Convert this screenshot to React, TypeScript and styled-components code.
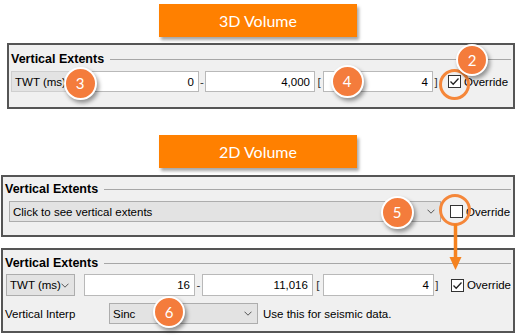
import React from 'react';
import styled, { createGlobalStyle } from 'styled-components';

const colors = {
  banner: '#ff8000',
  callout: '#f47c3c',
  ring: '#f5873a',
  arrow: '#f5821f',
  panelBg: '#f0f0f0',
  panelBorder: '#555555',
  field: '#ffffff',
  fieldBorder: '#b9b9b9',
  combo: '#e3e3e3',
  comboBorder: '#adadad',
  rule: '#a7a7a7',
};

const GlobalStyle = createGlobalStyle`
  body {
    margin: 0;
    background: #ffffff;
    font-family: "Liberation Sans", Arial, sans-serif;
    font-size: 11.5px;
    color: #000;
  }
`;

const Page = styled.div`
  width: 517px;
  height: 335px;
  position: relative;
  overflow: hidden;
  display: flex;
  flex-direction: column;
`;

const Banner = styled.div<{ $top: number }>`
  margin-top: ${(p) => p.$top}px;
  margin-left: 159px;
  width: 198px;
  height: 33px;
  background: ${colors.banner};
  color: #fff;
  font-family: Lato, "Open Sans", sans-serif;
  font-size: 16px;
  display: flex;
  align-items: center;
  justify-content: center;
  box-shadow: 2px 3px 3px rgba(0, 0, 0, 0.35);
`;

const Panel = styled.div<{ $top: number; $left: number; $height: number; $padTop: number }>`
  box-sizing: border-box;
  margin-top: ${(p) => p.$top}px;
  margin-left: ${(p) => p.$left}px;
  width: ${(p) => 515 - p.$left}px;
  height: ${(p) => p.$height}px;
  border: 2px solid ${colors.panelBorder};
  background: ${colors.panelBg};
  padding: ${(p) => p.$padTop}px 2px 0 2px;
  display: flex;
  flex-direction: column;
`;

const TitleRow = styled.div`
  display: flex;
  align-items: center;
  height: 14px;
`;

const Title = styled.span`
  font-weight: bold;
  font-size: 12.5px;
  white-space: nowrap;
`;

const Rule = styled.div`
  flex: 1;
  height: 0;
  border-top: 1px solid ${colors.rule};
  margin-left: 6px;
`;

const Row = styled.div<{ $gap: number; $height: number; $indent: number }>`
  display: flex;
  align-items: center;
  margin-top: ${(p) => p.$gap}px;
  height: ${(p) => p.$height}px;
  padding-left: ${(p) => p.$indent}px;
`;

const LabelBox = styled.div<{ $width: number }>`
  box-sizing: border-box;
  width: ${(p) => p.$width}px;
  height: 100%;
  background: ${colors.combo};
  border: 1px solid #cfcfcf;
  display: flex;
  align-items: center;
  padding-left: 3px;
`;

const Field = styled.div<{ $width: number; $ml?: number }>`
  box-sizing: border-box;
  width: ${(p) => p.$width}px;
  margin-left: ${(p) => p.$ml ?? 0}px;
  height: 100%;
  background: ${colors.field};
  border: 1px solid ${colors.fieldBorder};
  display: flex;
  align-items: center;
  justify-content: flex-end;
  padding-right: 4px;
`;

const Sep = styled.span<{ $width: number }>`
  width: ${(p) => p.$width}px;
  text-align: center;
  color: #333;
`;

const Combo = styled.div<{ $width: number; $ml?: number }>`
  box-sizing: border-box;
  width: ${(p) => p.$width}px;
  margin-left: ${(p) => p.$ml ?? 0}px;
  height: 100%;
  background: ${colors.combo};
  border: 1px solid ${colors.comboBorder};
  display: flex;
  align-items: center;
  justify-content: space-between;
  padding: 0 5px 0 3px;
  white-space: nowrap;
`;

const Check = styled.label<{ $ml: number }>`
  display: flex;
  align-items: center;
  margin-left: ${(p) => p.$ml}px;
  gap: 3px;
`;

const Box = styled.span`
  box-sizing: border-box;
  width: 13px;
  height: 13px;
  background: #fff;
  border: 1px solid #333;
  display: flex;
  align-items: center;
  justify-content: center;
`;

const PlainLabel = styled.span<{ $width: number }>`
  width: ${(p) => p.$width}px;
  white-space: nowrap;
`;

const Note = styled.span`
  margin-left: 5px;
  white-space: nowrap;
`;

const Callout = styled.div<{ $x: number; $y: number; $d: number }>`
  position: absolute;
  box-sizing: border-box;
  left: ${(p) => p.$x - p.$d / 2}px;
  top: ${(p) => p.$y - p.$d / 2}px;
  width: ${(p) => p.$d}px;
  height: ${(p) => p.$d}px;
  border-radius: 50%;
  background: ${colors.callout};
  border: 2px solid #fff;
  box-shadow: 2px 3px 4px rgba(0, 0, 0, 0.4);
  color: #fff;
  font-family: Lato, "Open Sans", sans-serif;
  font-size: 15px;
  display: flex;
  align-items: center;
  justify-content: center;
`;

const Ring = styled.div<{ $x: number; $y: number; $d: number }>`
  position: absolute;
  box-sizing: border-box;
  left: ${(p) => p.$x - p.$d / 2}px;
  top: ${(p) => p.$y - p.$d / 2}px;
  width: ${(p) => p.$d}px;
  height: ${(p) => p.$d}px;
  border-radius: 50%;
  border: 3px solid ${colors.ring};
`;

const ArrowWrap = styled.svg`
  position: absolute;
  left: 448px;
  top: 224px;
`;

const Chevron = () => (
  <svg width="8" height="5" viewBox="0 0 8 5">
    <polyline points="0.5,0.7 4,4.2 7.5,0.7" fill="none" stroke="#555" strokeWidth="1" />
  </svg>
);

const Tick = () => (
  <svg width="11" height="11" viewBox="0 0 11 11">
    <polyline points="1.5,5.5 4.2,8.3 9.5,2.5" fill="none" stroke="#222" strokeWidth="1.3" />
  </svg>
);

const Override = ({ checked, ml }: { checked: boolean; ml: number }) => (
  <Check $ml={ml}>
    <Box>{checked && <Tick />}</Box>
    Override
  </Check>
);

export default function App() {
  return (
    <>
      <GlobalStyle />
      <Page>
        <Banner $top={4}>3D Volume</Banner>
        <Panel $top={6} $left={7} $height={66} $padTop={7}>
          <TitleRow>
            <Title>Vertical Extents</Title>
            <Rule />
          </TitleRow>
          <Row $gap={5} $height={21} $indent={0}>
            <LabelBox $width={75}>TWT (ms)</LabelBox>
            <Field $width={110} $ml={3}>0</Field>
            <Sep $width={6}>-</Sep>
            <Field $width={110}>4,000</Field>
            <Sep $width={8}>[</Sep>
            <Field $width={110}>4</Field>
            <Sep $width={6}>]</Sep>
            <Override checked ml={9} />
          </Row>
        </Panel>

        <Banner $top={26}>2D Volume</Banner>
        <Panel $top={7} $left={1} $height={62} $padTop={5}>
          <TitleRow>
            <Title>Vertical Extents</Title>
            <Rule />
          </TitleRow>
          <Row $gap={5} $height={21} $indent={4}>
            <Combo $width={432}>
              Click to see vertical extents
              <Chevron />
            </Combo>
            <Override checked={false} ml={9} />
          </Row>
        </Panel>

        <Panel $top={11} $left={1} $height={85} $padTop={6}>
          <TitleRow>
            <Title>Vertical Extents</Title>
            <Rule />
          </TitleRow>
          <Row $gap={4} $height={22} $indent={1}>
            <Combo $width={69}>
              TWT (ms)
              <Chevron />
            </Combo>
            <Field $width={111} $ml={9}>16</Field>
            <Sep $width={7}>-</Sep>
            <Field $width={111}>11,016</Field>
            <Sep $width={10}>[</Sep>
            <Field $width={111}>4</Field>
            <Sep $width={6}>]</Sep>
            <Override checked ml={11} />
          </Row>
          <Row $gap={7} $height={21} $indent={0}>
            <PlainLabel $width={104}>Vertical Interp</PlainLabel>
            <Combo $width={149}>
              Sinc
              <Chevron />
            </Combo>
            <Note>Use this for seismic data.</Note>
          </Row>
        </Panel>

        <Ring $x={454} $y={84} $d={31} />
        <Callout $x={472} $y={60} $d={32}>2</Callout>
        <Callout $x={80} $y={83} $d={33}>3</Callout>
        <Callout $x={347} $y={81} $d={33}>4</Callout>

        <Ring $x={455} $y={210} $d={32} />
        <Callout $x={397} $y={212} $d={33}>5</Callout>
        <ArrowWrap width="15" height="48" viewBox="0 0 15 48">
          <line x1="7.5" y1="0" x2="7.5" y2="34" stroke={colors.arrow} strokeWidth="3.5" />
          <polygon points="1.5,33 13.5,33 7.5,46" fill={colors.arrow} />
        </ArrowWrap>

        <Callout $x={169} $y={312} $d={32}>6</Callout>
      </Page>
    </>
  );
}
